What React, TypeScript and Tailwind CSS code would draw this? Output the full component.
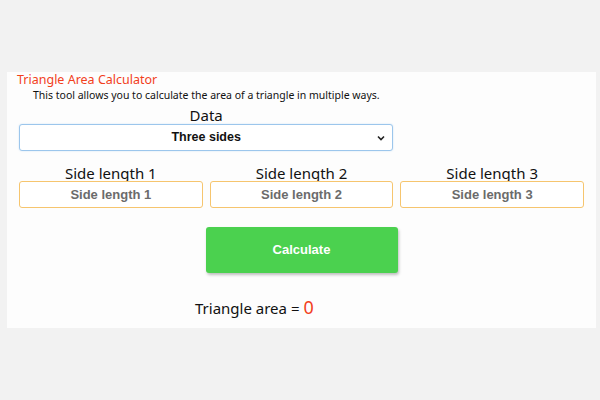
import React from "react";

const comic = { fontFamily: '"Comic Sans MS", "Noto Sans", sans-serif' };
const arial = { fontFamily: '"Liberation Sans", Arial, sans-serif' };

export default function App() {
  return (
    <div className="w-[600px] h-[400px] bg-[#f2f2f2] pt-[72px] pl-[7px]">
      <div className="w-[589px] h-[256px] bg-[#fdfdfd] px-[12px] pt-[1px]" style={comic}>
        <div className="text-[12.5px] leading-[14px] text-[#f2401c] -ml-[2px]">Triangle Area Calculator</div>
        <div className="text-[10.5px] leading-[14px] text-[#111] ml-[14px] mt-[1px]">This tool allows you to calculate the area of a triangle in multiple ways.</div>
        <div className="grid grid-cols-3 gap-x-[7px] mt-[4px]">
          <div className="col-span-2 flex flex-col items-center">
            <div className="text-[15px] leading-[18px] text-[#111]">Data</div>
            <div className="relative w-full h-[27px] border border-[#9cc6ec] rounded-[3px] bg-white shadow-[0_0_2px_#cfe3f5] flex items-center justify-center">
              <span className="text-[12.5px] font-bold text-[#111]" style={arial}>Three sides</span>
              <svg className="absolute right-[7px] top-[10px]" width="8" height="6" viewBox="0 0 8 6">
                <path d="M1 1.5 L4 4.5 L7 1.5" fill="none" stroke="#222" strokeWidth="1.6" />
              </svg>
            </div>
          </div>
        </div>
        <div className="grid grid-cols-3 gap-x-[7px] mt-[14px]">
          {[1, 2, 3].map((n) => (
            <div key={n} className="flex flex-col items-center">
              <div className="text-[15px] leading-[16px] text-[#111]">Side length {n}</div>
              <div className="w-full h-[27px] border border-[#f6c56e] rounded-[3px] bg-white flex items-center justify-center">
                <span className="text-[13px] font-bold text-[#6b6b6b]" style={arial}>Side length {n}</span>
              </div>
            </div>
          ))}
        </div>
        <div className="flex justify-center mt-[19px]">
          <button className="w-[192px] h-[46px] bg-[#4bd14f] rounded-[3px] shadow-[1px_2px_3px_rgba(0,0,0,0.25)] text-white text-[13px] font-bold" style={arial}>Calculate</button>
        </div>
        <div className="flex items-baseline mt-[24px] pl-[176px] leading-[20px] text-[15px] text-[#111]">
          <span>Triangle area =&nbsp;</span>
          <span className="text-[18px] text-[#f2401c]">0</span>
        </div>
      </div>
    </div>
  );
}
